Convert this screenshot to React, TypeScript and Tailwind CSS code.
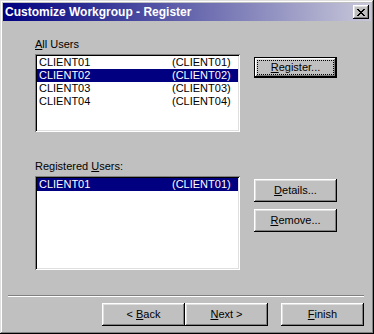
import React from "react";

const raised =
  "bg-[#c0c0c0] shadow-[inset_-1px_-1px_#000,inset_1px_1px_#fff,inset_-2px_-2px_#808080,inset_2px_2px_#dfdfdf]";
const sunken =
  "bg-white p-[2px] shadow-[inset_1px_1px_#808080,inset_-1px_-1px_#fff,inset_2px_2px_#000,inset_-2px_-2px_#dfdfdf]";

const Mn = ({ c }: { c: string }) => <span className="underline underline-offset-[1px]">{c}</span>;

const Btn = ({
  pre = "",
  mn,
  post,
  className = "",
}: {
  pre?: string;
  mn: string;
  post: string;
  className?: string;
}) => (
  <div className={`${raised} w-[83px] h-[23px] flex items-center justify-center ${className}`}>
    <span>
      {pre}
      <Mn c={mn} />
      {post}
    </span>
  </div>
);

type Row = { name: string; id: string; sel?: boolean };

const ListBox = ({ rows, h }: { rows: Row[]; h: string }) => (
  <div className={`${sunken} ${h}`}>
    {rows.map((r) => (
      <div
        key={r.name}
        className={`flex h-[13px] leading-[13px] pl-[2px] ${
          r.sel ? "bg-[#000080] text-white" : "text-black"
        }`}
      >
        <span className="w-[133px]">{r.name}</span>
        <span>{r.id}</span>
      </div>
    ))}
  </div>
);

const X = () => {
  const px = [
    "##....##",
    ".##..##.",
    "..####..",
    "...##...",
    "..####..",
    ".##..##.",
    "##....##",
  ];
  return (
    <svg width="8" height="7" viewBox="0 0 8 7" shapeRendering="crispEdges">
      {px.flatMap((row, y) =>
        row.split("").map((ch, x) =>
          ch === "#" ? <rect key={`${x}-${y}`} x={x} y={y} width="1" height="1" fill="#000" /> : null
        )
      )}
    </svg>
  );
};

export default function App() {
  const all: Row[] = [
    { name: "CLIENT01", id: "(CLIENT01)" },
    { name: "CLIENT02", id: "(CLIENT02)", sel: true },
    { name: "CLIENT03", id: "(CLIENT03)" },
    { name: "CLIENT04", id: "(CLIENT04)" },
  ];
  const reg: Row[] = [{ name: "CLIENT01", id: "(CLIENT01)", sel: true }];

  return (
    <div
      className="w-[374px] h-[334px] p-[3px] bg-[#c0c0c0] text-[11px] text-black shadow-[inset_-1px_-1px_#000,inset_1px_1px_#dfdfdf,inset_-2px_-2px_#808080,inset_2px_2px_#fff]"
      style={{ fontFamily: '"Liberation Sans", Arial, sans-serif' }}
    >
      <div className="h-[18px] flex items-center justify-between pl-[2px] pr-[2px] bg-[linear-gradient(to_right,#000080,#c8c8da)]">
        <span className="text-white font-bold text-[12px] leading-[18px]">Customize Workgroup - Register</span>
        <div className={`${raised} w-[16px] h-[14px] flex items-center justify-center`}>
          <X />
        </div>
      </div>

      <div className="pl-[32px] pt-[17px]">
        <div className="flex">
          <div className="w-[205px]">
            <div className="h-[13px] leading-[13px]">
              <Mn c="A" />ll Users
            </div>
            <div className="mt-[3px]">
              <ListBox rows={all} h="h-[78px]" />
            </div>
          </div>
          <div className="ml-[14px] pt-[19px]">
            <div className="w-[83px] h-[21px] border border-black bg-[#c0c0c0] shadow-[inset_-1px_-1px_#000,inset_1px_1px_#fff,inset_-2px_-2px_#808080,inset_2px_2px_#dfdfdf] p-[2px]">
              <div className="h-full border border-dotted border-black flex items-center justify-center">
                <span>
                  <Mn c="R" />egister...
                </span>
              </div>
            </div>
          </div>
        </div>

        <div className="flex mt-[28px]">
          <div className="w-[205px]">
            <div className="h-[13px] leading-[13px]">
              Registered <Mn c="U" />sers:
            </div>
            <div className="mt-[3px]">
              <ListBox rows={reg} h="h-[94px]" />
            </div>
          </div>
          <div className="ml-[14px] pt-[19px] flex flex-col gap-[7px]">
            <Btn mn="D" post="etails..." />
            <Btn mn="R" post="emove..." />
          </div>
        </div>
      </div>

      <div className="mt-[25px] ml-[5px] mr-[7px] h-[2px] border-t border-[#808080] border-b border-b-white" />

      <div className="mt-[6px] pr-[7px] flex justify-end">
        <Btn pre="< " mn="B" post="ack" className="h-[22px]" />
        <Btn mn="N" post="ext >" className="h-[22px]" />
        <Btn mn="F" post="inish" className="h-[22px] ml-[13px]" />
      </div>
    </div>
  );
}
